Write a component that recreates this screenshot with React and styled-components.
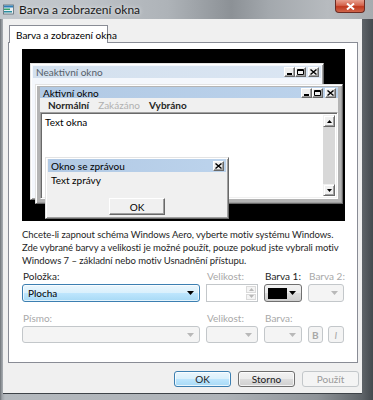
import styled, { createGlobalStyle } from "styled-components";

const GlobalStyle = createGlobalStyle`
  html, body { margin: 0; padding: 0; }
  body {
    font-family: Lato, "Open Sans", sans-serif;
    font-size: 10px;
    color: #000;
    background: #fff;
  }
  #root { width: 373px; height: 400px; overflow: hidden; }
`;

const Frame = styled.div`
  width: 373px;
  height: 400px;
  display: flex;
  flex-direction: column;
  background: linear-gradient(to right, #6d7277 0, #9ea3a8 2px, #b4b9be 5px, #aeb3b8 60%, #8f9499 85%, #5f6469 97%, #44494e 100%);
`;

const TitleBar = styled.div`
  height: 19px;
  flex: none;
  display: flex;
  align-items: center;
  gap: 5px;
  padding-left: 3px;
  background: linear-gradient(to right, #c3c8cd 0, #bfc4c9 20%, #aeb3b8 45%, #8c9196 62%, #a3a8ad 72%, #b7bbbf 88%, #a7abaf 100%);
`;

const TitleText = styled.span`
  font-size: 12px;
  color: #1a1a1a;
  text-shadow: 0 0 4px rgba(255, 255, 255, 0.9);
`;

const CloseButton = styled.div`
  align-self: flex-start;
  margin-left: auto;
  margin-right: 8px;
  width: 30px;
  height: 13px;
  box-sizing: border-box;
  border: 1px solid #6b2a22;
  border-top: none;
  border-radius: 0 0 4px 4px;
  background: linear-gradient(to bottom, #e8a08f 0, #d4644d 45%, #c0391f 55%, #d0654a 100%);
  display: flex;
  align-items: center;
  justify-content: center;
`;

const Client = styled.div`
  flex: 1;
  margin: 0 11px 7px 3px;
  background: #f0f0f0;
  padding: 6px 3px 6px 5px;
  display: flex;
  flex-direction: column;
  box-shadow: 0 1px 0 #3e4348;
`;

const TabStrip = styled.div`
  height: 17px;
  display: flex;
  align-items: flex-end;
`;

const Tab = styled.div`
  margin-left: 1px;
  width: 99px;
  height: 18px;
  box-sizing: border-box;
  border: 1px solid #898c95;
  border-bottom: none;
  background: #fff;
  padding: 3px 0 0 6px;
  margin-bottom: -1px;
  position: relative;
  z-index: 1;
  white-space: nowrap;
`;

const Panel = styled.div`
  width: 350px;
  height: 321px;
  box-sizing: border-box;
  border: 1px solid #898c95;
  background: #fff;
  padding: 6px 0 0 13px;
`;

const Preview = styled.div`
  width: 323px;
  height: 172px;
  background: #000;
  position: relative;
`;

const Win = styled.div`
  position: absolute;
  box-sizing: border-box;
  display: flex;
  flex-direction: column;
  border: 1px solid;
  border-color: #e3e3e3 #696969 #696969 #e3e3e3;
  box-shadow: inset 1px 1px 0 #fff, inset -1px -1px 0 #a0a0a0;
  background: ${(p) => p.$bg};
  padding: ${(p) => p.$pad};
`;

const Caption = styled.div`
  height: ${(p) => p.$h}px;
  flex: none;
  display: flex;
  align-items: center;
  padding: 0 2px 0 3px;
  background: ${(p) =>
    p.$active
      ? "linear-gradient(to right, #b1c9e4, #bcd3ec)"
      : "linear-gradient(to right, #d3e0ee, #dbe6f3)"};
  color: ${(p) => (p.$active ? "#000" : "#55606a")};
  white-space: nowrap;
`;

const CapButtons = styled.div`
  margin-left: auto;
  display: flex;
`;

const CapBtn = styled.div`
  width: 11px;
  height: 10px;
  box-sizing: border-box;
  background: #f0f0f0;
  border: 1px solid;
  border-color: #fff #696969 #696969 #fff;
  box-shadow: inset -1px -1px 0 #a0a0a0;
  display: flex;
  align-items: center;
  justify-content: center;
  margin-left: ${(p) => (p.$spaced ? "2px" : "0")};
`;

const MenuBar = styled.div`
  height: 14px;
  flex: none;
  display: flex;
  align-items: center;
  gap: 9px;
  padding-left: 8px;
  background: #f0f0f0;
`;

const MenuItem = styled.span`
  font-weight: ${(p) => (p.$disabled ? 400 : 700)};
  color: ${(p) => (p.$disabled ? "#b0b0b0" : "#262626")};
`;

const TextArea = styled.div`
  flex: 1;
  display: flex;
  border: 1px solid;
  border-color: #a0a0a0 #fff #fff #a0a0a0;
  box-shadow: inset 1px 1px 0 #696969, inset -1px -1px 0 #f0f0f0;
  background: #fff;
  padding: 2px;
`;

const TextBody = styled.div`
  flex: 1;
  padding: 1px 2px;
`;

const ScrollBar = styled.div`
  width: 12px;
  display: flex;
  flex-direction: column;
  justify-content: space-between;
  background: #d8d8d8;
`;

const ScrollBtn = styled.div`
  width: 12px;
  height: 12px;
  box-sizing: border-box;
  background: #f0f0f0;
  border: 1px solid;
  border-color: #f0f0f0 #696969 #696969 #f0f0f0;
  box-shadow: inset 1px 1px 0 #fff, inset -1px -1px 0 #a0a0a0;
  display: flex;
  align-items: center;
  justify-content: center;
`;

const MsgBody = styled.div`
  flex: 1;
  display: flex;
  flex-direction: column;
  align-items: center;
  padding-top: 2px;
`;

const MsgText = styled.div`
  align-self: flex-start;
  padding-left: 3px;
  height: 16px;
`;

const ClassicButton = styled.div`
  margin-top: 8px;
  width: 56px;
  height: 17px;
  box-sizing: border-box;
  display: flex;
  align-items: center;
  justify-content: center;
  background: #f0f0f0;
  border: 1px solid;
  border-color: #fff #696969 #696969 #fff;
  box-shadow: inset -1px -1px 0 #a0a0a0;
`;

const Description = styled.p`
  margin: 7px 0 0;
  line-height: 13px;
  font-size: 9.5px;
  letter-spacing: -0.05px;
  white-space: nowrap;
  color: #1e1e1e;
`;

const Form = styled.div`
  margin-top: 3px;
  display: grid;
  grid-template-columns: 178px 52px 38px 36px;
  grid-template-rows: 12px 18px 12px 18px;
  column-gap: 6px;
  row-gap: 2px;
`;

const Label = styled.div`
  line-height: 12px;
  white-space: nowrap;
  color: ${(p) => (p.$disabled ? "#a8a8a8" : "#1e1e1e")};
  margin-top: ${(p) => (p.$second ? "8px" : "0")};
  margin-left: 1px;
`;

const Combo = styled.div`
  box-sizing: border-box;
  height: ${(p) => (p.$second ? 17 : 18)}px;
  margin-top: ${(p) => (p.$second ? "8px" : "0")};
  border: 1px solid ${(p) => (p.$focus ? "#3c7fb1" : p.$dark ? "#707070" : "#c3c7ca")};
  border-radius: 3px;
  display: flex;
  align-items: center;
  padding: 0 5px;
  background: ${(p) =>
    p.$focus
      ? "linear-gradient(to bottom, #eaf6fd 0, #d9f0fc 50%, #bee6fd 51%, #a7d9f5 100%)"
      : p.$dark
      ? "linear-gradient(to bottom, #f2f2f2 0, #ebebeb 50%, #dddddd 51%, #cfcfcf 100%)"
      : "#f4f4f4"};
  box-shadow: ${(p) => (p.$focus ? "inset 0 0 0 1px rgba(255,255,255,0.7)" : "none")};
`;

const ComboText = styled.span`
  flex: 1;
`;

const Swatch = styled.span`
  width: 19px;
  height: 11px;
  background: #000;
  margin-left: -2px;
  flex: none;
`;

const Spinner = styled.div`
  box-sizing: border-box;
  height: 18px;
  border: 1px solid #c3c7ca;
  background: #fff;
  display: flex;
  justify-content: flex-end;
  padding: 1px;
`;

const SpinCol = styled.div`
  width: 10px;
  display: flex;
  flex-direction: column;
  gap: 1px;
`;

const SpinBtn = styled.div`
  flex: 1;
  border: 1px solid #dadada;
  background: #f4f4f4;
  display: flex;
  align-items: center;
  justify-content: center;
`;

const StyleBtns = styled.div`
  display: flex;
  gap: 5px;
  margin-top: 8px;
`;

const SmallBtn = styled.div`
  box-sizing: border-box;
  width: ${(p) => p.$w}px;
  height: 17px;
  border: 1px solid #c3c7ca;
  border-radius: 3px;
  background: #f4f4f4;
  color: #a8a8a8;
  display: flex;
  align-items: center;
  justify-content: center;
  font-weight: ${(p) => (p.$bold ? 700 : 400)};
  font-style: ${(p) => (p.$italic ? "italic" : "normal")};
`;

const ButtonRow = styled.div`
  display: flex;
  justify-content: flex-end;
  gap: 7px;
  margin-top: 8px;
`;

const DialogButton = styled.div`
  box-sizing: border-box;
  width: 57px;
  height: 16px;
  display: flex;
  align-items: center;
  justify-content: center;
  border-radius: 3px;
  border: 1px solid ${(p) => (p.$default ? "#3c7fb1" : p.$disabled ? "#c3c7ca" : "#707070")};
  color: ${(p) => (p.$disabled ? "#9a9a9a" : "#1a1a1a")};
  background: ${(p) =>
    p.$default
      ? "linear-gradient(to bottom, #eaf6fd 0, #d9f0fc 50%, #bee6fd 51%, #a7d9f5 100%)"
      : p.$disabled
      ? "#f4f4f4"
      : "linear-gradient(to bottom, #f2f2f2 0, #ebebeb 50%, #dddddd 51%, #cfcfcf 100%)"};
  box-shadow: ${(p) => (p.$disabled ? "none" : "inset 0 0 0 1px rgba(255,255,255,0.75)")};
`;

const Arrow = ({ color = "#000" }) => (
  <svg width="7" height="4" viewBox="0 0 7 4">
    <path d="M0 0h7L3.5 4z" fill={color} />
  </svg>
);

const Tri = ({ up, color = "#000" }) => (
  <svg width="5" height="3" viewBox="0 0 5 3">
    <path d={up ? "M0 3h5L2.5 0z" : "M0 0h5L2.5 3z"} fill={color} />
  </svg>
);

const MinGlyph = () => (
  <svg width="6" height="6" viewBox="0 0 6 6">
    <rect x="0" y="4" width="5" height="2" fill="#000" />
  </svg>
);

const MaxGlyph = () => (
  <svg width="7" height="6" viewBox="0 0 7 6">
    <path d="M0.5 0.5h6v5h-6z M0.5 1.5h6" fill="none" stroke="#000" strokeWidth="1" />
  </svg>
);

const XGlyph = () => (
  <svg width="7" height="6" viewBox="0 0 7 6">
    <path d="M0.5 0.5l6 5M6.5 0.5l-6 5" stroke="#000" strokeWidth="1.4" />
  </svg>
);

const WindowIcon = () => (
  <svg width="11" height="11" viewBox="0 0 11 11">
    <rect x="0.5" y="1" width="10" height="9" fill="#e8eef2" stroke="#5a6a74" strokeWidth="0.8" />
    <rect x="1" y="1.5" width="9" height="2" fill="#2e7fb8" />
    <rect x="1" y="4.5" width="6" height="1.5" fill="#35a36b" />
    <rect x="1" y="7" width="8" height="1.5" fill="#2d8fa0" />
  </svg>
);

const CaptionButtons = ({ full = true }) => (
  <CapButtons>
    {full && (
      <CapBtn>
        <MinGlyph />
      </CapBtn>
    )}
    {full && (
      <CapBtn>
        <MaxGlyph />
      </CapBtn>
    )}
    <CapBtn $spaced={full}>
      <XGlyph />
    </CapBtn>
  </CapButtons>
);

export default function App() {
  return (
    <>
      <GlobalStyle />
      <Frame>
        <TitleBar>
          <WindowIcon />
          <TitleText>Barva a zobrazení okna</TitleText>
          <CloseButton>
            <svg width="9" height="7" viewBox="0 0 9 7">
              <path d="M1 0.5l7 6M8 0.5l-7 6" stroke="#fff" strokeWidth="2" />
            </svg>
          </CloseButton>
        </TitleBar>

        <Client>
          <TabStrip>
            <Tab>Barva a zobrazení okna</Tab>
          </TabStrip>
          <Panel>
            <Preview>
              {/* neaktivní okno */}
              <Win $bg="#f4f7fc" $pad="2px" style={{ left: 8, top: 14, width: 294, height: 137 }}>
                <Caption $h={12}>
                  Neaktivní okno
                  <CaptionButtons />
                </Caption>
              </Win>

              {/* aktivní okno */}
              <Win $bg="#b4b4b4" $pad="2px 4px 4px 4px" style={{ left: 13, top: 35, width: 308, height: 120 }}>
                <Caption $h={11} $active>
                  Aktivní okno
                  <CaptionButtons />
                </Caption>
                <MenuBar>
                  <MenuItem>Normální</MenuItem>
                  <MenuItem $disabled>Zakázáno</MenuItem>
                  <MenuItem>Vybráno</MenuItem>
                </MenuBar>
                <TextArea>
                  <TextBody>Text okna</TextBody>
                  <ScrollBar>
                    <ScrollBtn>
                      <Tri up />
                    </ScrollBtn>
                    <ScrollBtn>
                      <Tri />
                    </ScrollBtn>
                  </ScrollBar>
                </TextArea>
              </Win>

              {/* okno se zprávou */}
              <Win $bg="#f0f0f0" $pad="1px 2px 2px 2px" style={{ left: 23, top: 108, width: 184, height: 62 }}>
                <Caption $h={13} $active>
                  Okno se zprávou
                  <CaptionButtons full={false} />
                </Caption>
                <MsgBody>
                  <MsgText>Text zprávy</MsgText>
                  <ClassicButton>OK</ClassicButton>
                </MsgBody>
              </Win>
            </Preview>

            <Description>
              Chcete-li zapnout schéma Windows Aero, vyberte motiv systému Windows.
              <br />
              Zde vybrané barvy a velikosti je možné použít, pouze pokud jste vybrali motiv
              <br />
              Windows 7 – základní nebo motiv Usnadnění přístupu.
            </Description>

            <Form>
              <Label>Položka:</Label>
              <Label $disabled>Velikost:</Label>
              <Label>Barva 1:</Label>
              <Label $disabled>Barva 2:</Label>

              <Combo $focus>
                <ComboText>Plocha</ComboText>
                <Arrow />
              </Combo>
              <Spinner>
                <SpinCol>
                  <SpinBtn>
                    <Tri up color="#b8b8b8" />
                  </SpinBtn>
                  <SpinBtn>
                    <Tri color="#b8b8b8" />
                  </SpinBtn>
                </SpinCol>
              </Spinner>
              <Combo $dark>
                <Swatch />
                <ComboText />
                <Arrow />
              </Combo>
              <Combo>
                <ComboText />
                <Arrow color="#b8b8b8" />
              </Combo>

              <Label $disabled $second>Písmo:</Label>
              <Label $disabled $second>Velikost:</Label>
              <Label $disabled $second>Barva:</Label>
              <div />

              <Combo $second>
                <ComboText />
                <Arrow color="#b8b8b8" />
              </Combo>
              <Combo $second>
                <ComboText />
                <Arrow color="#b8b8b8" />
              </Combo>
              <Combo $second>
                <ComboText />
                <Arrow color="#b8b8b8" />
              </Combo>
              <StyleBtns>
                <SmallBtn $w={15} $bold>B</SmallBtn>
                <SmallBtn $w={17} $italic>I</SmallBtn>
              </StyleBtns>
            </Form>
          </Panel>

          <ButtonRow>
            <DialogButton $default>OK</DialogButton>
            <DialogButton>Storno</DialogButton>
            <DialogButton $disabled>Použít</DialogButton>
          </ButtonRow>
        </Client>
      </Frame>
    </>
  );
}
